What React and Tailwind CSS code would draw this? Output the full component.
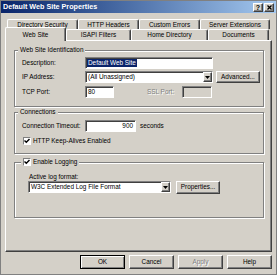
import React from 'react';

// Win2k style chrome
const raised =
  'border border-t-white border-l-white border-r-[#404040] border-b-[#404040] shadow-[inset_-1px_-1px_0_#808080] bg-[#d4d0c8]';
const sunken =
  'border border-t-[#808080] border-l-[#808080] border-r-white border-b-white shadow-[inset_1px_1px_0_#404040]';
const etched = 'border border-[#808080] shadow-[inset_1px_1px_0_#fff,1px_1px_0_#fff]';

const Check = () => (
  <span className="w-[8px] h-[8px] bg-white border border-t-[#808080] border-l-[#808080] border-r-white border-b-white flex items-center justify-center">
    <svg width="6" height="6" viewBox="0 0 6 6">
      <path d="M0.5 2.5 L2.3 4.3 L5.5 1" stroke="#000" strokeWidth="1.4" fill="none" />
    </svg>
  </span>
);

const Arrow = () => (
  <span className={`${raised} w-[9px] h-full flex items-center justify-center`}>
    <svg width="5" height="3" viewBox="0 0 5 3">
      <path d="M0 0 H5 L2.5 3 Z" fill="#000" />
    </svg>
  </span>
);

const Button = ({ children, className = '', disabled }) => (
  <div
    className={`${raised} flex items-center justify-center ${
      disabled ? 'text-[#808080] [text-shadow:1px_1px_0_#fff]' : 'text-black'
    } ${className}`}
  >
    {children}
  </div>
);

const Tab = ({ label, w, selected }) => (
  <div
    className={`${w} flex items-center justify-center border-t border-l border-t-white border-l-white border-r border-r-[#404040] shadow-[inset_-1px_0_0_#808080] rounded-t-[2px] bg-[#d4d0c8] ${
      selected ? 'relative z-10 h-[14px] -mb-[1px]' : 'h-full'
    }`}
  >
    {label}
  </div>
);

const Group = ({ legend, children, className = '' }) => (
  <fieldset className={`${etched} w-[250px] ${className}`}>
    <legend className="ml-[3px] px-[2px] bg-[#d4d0c8] leading-[8px] h-[8px]">{legend}</legend>
    {children}
  </fieldset>
);

export default function App() {
  return (
    <div className="w-[277px] h-[275px] bg-[#d4d0c8] border border-[#808080] flex flex-col text-[6.4px] leading-[8px] text-black font-['Liberation_Sans',Arial,sans-serif]">
      {/* Title bar */}
      <div className="h-[12px] flex items-center pl-[2px] pr-[2px] bg-linear-to-r from-[#0a246a] to-[#a6caf0]">
        <span className="flex-1 text-white font-bold text-[7.2px]">Default Web Site Properties</span>
        <div className="flex gap-[1px]">
          <div className={`${raised} w-[10px] h-[9px] flex items-center justify-center font-bold text-[7px] leading-none`}>?</div>
          <div className={`${raised} w-[10px] h-[9px] flex items-center justify-center`}>
            <svg width="5" height="5" viewBox="0 0 5 5">
              <path d="M0.5 0.5 L4.5 4.5 M4.5 0.5 L0.5 4.5" stroke="#000" strokeWidth="1.3" />
            </svg>
          </div>
        </div>
      </div>

      {/* Tabs + panel */}
      <div className="px-[4px] mt-[6px] flex flex-col">
        <div className="flex h-[10px] pl-[2px]">
          <Tab label="Directory Security" w="w-[71px]" />
          <Tab label="HTTP Headers" w="w-[61px]" />
          <Tab label="Custom Errors" w="w-[61px]" />
          <Tab label="Server Extensions" w="w-[70px]" />
        </div>
        <div className="flex h-[11px] items-end">
          <Tab label="Web Site" w="w-[61px]" selected />
          <Tab label="ISAPI Filters" w="w-[65px]" />
          <Tab label="Home Directory" w="w-[77px]" />
          <Tab label="Documents" w="w-[61px]" />
        </div>

        <div className={`${raised} h-[212px] pt-[5px] pl-[8px] flex flex-col`}>
          <Group legend="Web Site Identification">
            <div className="flex flex-col pl-[7px] pt-[3px] pb-[8px]">
              <div className="flex items-center h-[12px]">
                <span className="w-[63px]">Description:</span>
                <div className={`${sunken} bg-white w-[128px] h-[12px] flex items-center pl-[1px]`}>
                  <span className="bg-[#0a246a] text-white px-[1px]">Default Web Site</span>
                </div>
              </div>
              <div className="flex items-center h-[12px] mt-[2px]">
                <span className="w-[63px]">IP Address:</span>
                <div className={`${sunken} bg-white w-[128px] h-[12px] flex items-center`}>
                  <span className="flex-1 pl-[2px]">(All Unassigned)</span>
                  <Arrow />
                </div>
                <Button className="ml-[3px] w-[44px] h-[12px]">Advanced...</Button>
              </div>
              <div className="flex items-center h-[12px] mt-[3px]">
                <span className="w-[63px]">TCP Port:</span>
                <div className={`${sunken} bg-white w-[29px] h-[12px] flex items-center pl-[2px]`}>80</div>
                <span className="ml-[33px] w-[35px] text-[#808080] [text-shadow:1px_1px_0_#fff]">SSL Port:</span>
                <div className={`${sunken} w-[30px] h-[12px]`} />
              </div>
            </div>
          </Group>

          <Group legend="Connections" className="mt-[1px]">
            <div className="flex flex-col pl-[7px] pt-[4px] pb-[8px]">
              <div className="flex items-center h-[12px]">
                <span className="w-[63px]">Connection Timeout:</span>
                <div className={`${sunken} bg-white w-[51px] h-[12px] flex items-center justify-end pr-[2px]`}>900</div>
                <span className="ml-[4px]">seconds</span>
              </div>
              <div className="flex items-center h-[9px] mt-[4px] pl-[1px] gap-[2px]">
                <Check />
                <span>HTTP Keep-Alives Enabled</span>
              </div>
            </div>
          </Group>

          <fieldset className={`${etched} w-[250px] mt-[3px]`}>
            <legend className="ml-[6px] px-[2px] bg-[#d4d0c8] h-[10px] flex items-center gap-[2px]">
              <Check />
              <span>Enable Logging</span>
            </legend>
            <div className="flex flex-col pl-[13px] pt-[6px] pb-[24px]">
              <span className="h-[8px] pl-[1px]">Active log format:</span>
              <div className="flex items-center h-[12px]">
                <div className={`${sunken} bg-white w-[143px] h-[12px] flex items-center`}>
                  <span className="flex-1 pl-[2px]">W3C Extended Log File Format</span>
                  <Arrow />
                </div>
                <Button className="ml-[5px] w-[44px] h-[13px]">Properties...</Button>
              </div>
            </div>
          </fieldset>
        </div>
      </div>

      {/* Dialog buttons */}
      <div className="flex justify-end gap-[4px] pr-[4px] mt-[3px]">
        <div className="w-[45px] h-[14px] flex items-center justify-center bg-[#d4d0c8] border border-black shadow-[inset_1px_1px_0_#fff,inset_-1px_-1px_0_#808080]">
          OK
        </div>
        <Button className="w-[45px] h-[14px]">Cancel</Button>
        <Button className="w-[45px] h-[14px]" disabled>Apply</Button>
        <Button className="w-[45px] h-[14px]">Help</Button>
      </div>
    </div>
  );
}
